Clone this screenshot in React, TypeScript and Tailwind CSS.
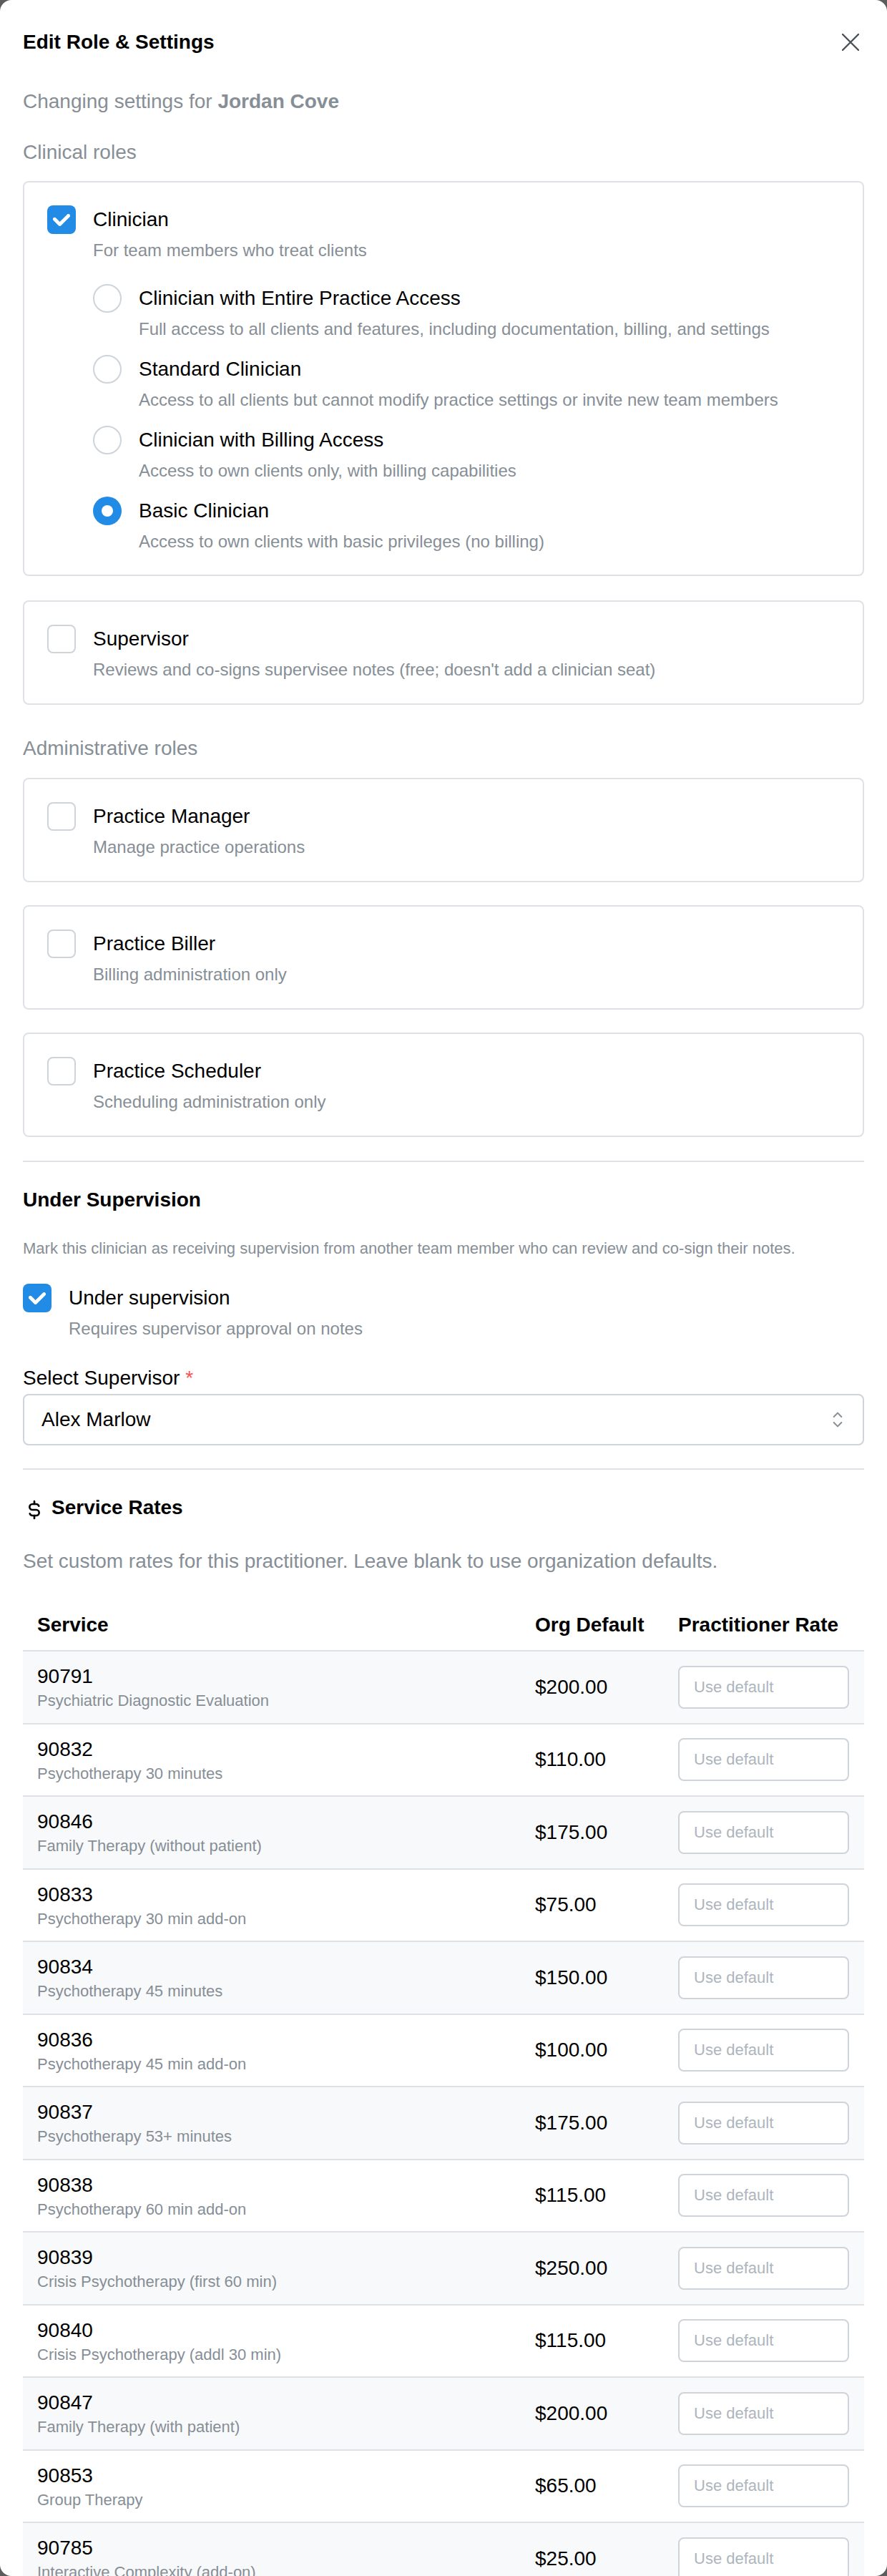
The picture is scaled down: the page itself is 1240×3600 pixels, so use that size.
const clinicianLevels = [
  {
    label: "Clinician with Entire Practice Access",
    description: "Full access to all clients and features, including documentation, billing, and settings",
  },
  {
    label: "Standard Clinician",
    description: "Access to all clients but cannot modify practice settings or invite new team members",
  },
  { label: "Clinician with Billing Access", description: "Access to own clients only, with billing capabilities" },
  { label: "Basic Clinician", description: "Access to own clients with basic privileges (no billing)", selected: true },
];

const adminRoles = [
  { label: "Practice Manager", description: "Manage practice operations" },
  { label: "Practice Biller", description: "Billing administration only" },
  { label: "Practice Scheduler", description: "Scheduling administration only" },
];

const services = [
  { code: "90791", name: "Psychiatric Diagnostic Evaluation", rate: "$200.00" },
  { code: "90832", name: "Psychotherapy 30 minutes", rate: "$110.00" },
  { code: "90846", name: "Family Therapy (without patient)", rate: "$175.00" },
  { code: "90833", name: "Psychotherapy 30 min add-on", rate: "$75.00" },
  { code: "90834", name: "Psychotherapy 45 minutes", rate: "$150.00" },
  { code: "90836", name: "Psychotherapy 45 min add-on", rate: "$100.00" },
  { code: "90837", name: "Psychotherapy 53+ minutes", rate: "$175.00" },
  { code: "90838", name: "Psychotherapy 60 min add-on", rate: "$115.00" },
  { code: "90839", name: "Crisis Psychotherapy (first 60 min)", rate: "$250.00" },
  { code: "90840", name: "Crisis Psychotherapy (addl 30 min)", rate: "$115.00" },
  { code: "90847", name: "Family Therapy (with patient)", rate: "$200.00" },
  { code: "90853", name: "Group Therapy", rate: "$65.00" },
  { code: "90785", name: "Interactive Complexity (add-on)", rate: "$25.00" },
];

function CheckBox({ checked }: { checked?: boolean }) {
  if (!checked) {
    return <div className="w-10 h-10 shrink-0 rounded-lg border-2 border-[#ced4da] bg-white" />;
  }
  return (
    <div className="w-10 h-10 shrink-0 rounded-lg bg-[#228be6] flex items-center justify-center">
      <svg viewBox="0 0 10 7" className="w-6 h-[17px]" fill="#fff">
        <path d="M4 4.586L1.707 2.293A1 1 0 1 0 .293 3.707l3 3a.997.997 0 0 0 1.414 0l5-5A1 1 0 1 0 8.293.293L4 4.586z" />
      </svg>
    </div>
  );
}

function RadioDot({ selected }: { selected?: boolean }) {
  if (!selected) {
    return <div className="w-10 h-10 shrink-0 rounded-full border-2 border-[#ced4da] bg-white" />;
  }
  return (
    <div className="w-10 h-10 shrink-0 rounded-full bg-[#228be6] flex items-center justify-center">
      <div className="w-4 h-4 rounded-full bg-white" />
    </div>
  );
}

function LabelBlock({ label, description }: { label: string; description: string }) {
  return (
    <div>
      <div className="text-[28px] leading-[40px]">{label}</div>
      <div className="mt-2 text-[24px] leading-[30px] text-[#868e96]">{description}</div>
    </div>
  );
}

function RoleCard({ label, description }: { label: string; description: string }) {
  return (
    <div className="rounded-lg border-2 border-[#dee2e6] p-8 flex gap-6">
      <CheckBox />
      <LabelBlock label={label} description={description} />
    </div>
  );
}

export default function App() {
  return (
    <div className="h-[3600px] bg-[#5c5c5c] overflow-hidden font-['Liberation_Sans',sans-serif] text-black">
      <div className="h-full bg-white rounded-2xl overflow-hidden px-8">
        {/* Header */}
        <div className="flex items-center justify-between h-[118px] pr-[7px]">
          <h2 className="text-[28px] leading-[36px] font-bold">Edit Role &amp; Settings</h2>
          <svg viewBox="0 0 24 24" className="w-6 h-6" stroke="#495057" strokeWidth="2.4" strokeLinecap="round">
            <path d="M1 1L23 23M23 1L1 23" />
          </svg>
        </div>

        <p className="mt-[2px] text-[28px] leading-[44px] text-[#868e96]">
          Changing settings for <span className="font-bold">Jordan Cove</span>
        </p>

        <p className="mt-[27px] text-[28px] leading-[44px] text-[#868e96]">Clinical roles</p>

        {/* Clinician */}
        <div className="mt-[18px] rounded-lg border-2 border-[#dee2e6] px-8 pt-8 pb-[31px]">
          <div className="flex gap-6">
            <CheckBox checked />
            <LabelBlock label="Clinician" description="For team members who treat clients" />
          </div>
          <div className="mt-8 ml-16 flex flex-col gap-[21px]">
            {clinicianLevels.map((level) => (
              <div key={level.label} className="flex gap-6">
                <RadioDot selected={level.selected} />
                <LabelBlock label={level.label} description={level.description} />
              </div>
            ))}
          </div>
        </div>

        <div className="mt-[34px]">
          <RoleCard
            label="Supervisor"
            description="Reviews and co-signs supervisee notes (free; doesn't add a clinician seat)"
          />
        </div>

        <p className="mt-[39px] text-[28px] leading-[44px] text-[#868e96]">Administrative roles</p>

        <div className="mt-[19px] flex flex-col gap-8">
          {adminRoles.map((role) => (
            <RoleCard key={role.label} label={role.label} description={role.description} />
          ))}
        </div>

        <div className="mt-[33px] border-t-2 border-[#dee2e6]" />

        {/* Under supervision */}
        <h3 className="mt-[31px] text-[28px] leading-[44px] font-bold">Under Supervision</h3>
        <p className="mt-[29px] text-[22px] leading-[34px] text-[#868e96]">
          Mark this clinician as receiving supervision from another team member who can review and co-sign their notes.
        </p>
        <div className="mt-8 flex gap-6">
          <CheckBox checked />
          <LabelBlock label="Under supervision" description="Requires supervisor approval on notes" />
        </div>

        <label className="block mt-8 text-[28px] leading-[44px]">
          Select Supervisor <span className="text-[#fa5252]">*</span>
        </label>
        <div className="h-[72px] rounded-lg border-2 border-[#ced4da] flex items-center justify-between pl-6 pr-[19px]">
          <span className="text-[28px]">Alex Marlow</span>
          <svg
            viewBox="0 0 24 24"
            className="w-8 h-8"
            fill="none"
            stroke="#868e96"
            strokeWidth="1.5"
            strokeLinecap="round"
            strokeLinejoin="round"
          >
            <path d="M8 9l4 -4l4 4" />
            <path d="M16 15l-4 4l-4 -4" />
          </svg>
        </div>

        <div className="mt-8 border-t-2 border-[#dee2e6]" />

        {/* Service rates */}
        <div className="mt-[31px] flex items-center gap-2 h-[44px]">
          <svg
            viewBox="0 0 24 24"
            className="w-8 h-8 mt-1.5"
            fill="none"
            stroke="#000"
            strokeWidth="2"
            strokeLinecap="round"
            strokeLinejoin="round"
          >
            <path d="M16.7 8a3 3 0 0 0 -2.7 -2h-4a3 3 0 0 0 0 6h4a3 3 0 0 1 0 6h-4a3 3 0 0 1 -2.7 -2" />
            <path d="M12 3v3m0 12v3" />
          </svg>
          <h3 className="text-[28px] font-bold">Service Rates</h3>
        </div>
        <p className="mt-[31px] text-[28px] leading-[44px] text-[#868e96]">
          Set custom rates for this practitioner. Leave blank to use organization defaults.
        </p>

        {/* Rates table */}
        <div className="mt-8">
          <div className="grid grid-cols-[696px_200px_280px] items-center h-[70px] text-[28px] font-bold">
            <div className="pl-5">Service</div>
            <div className="pl-5">Org Default</div>
            <div className="pl-5">Practitioner Rate</div>
          </div>
          {services.map((service, i) => (
            <div
              key={service.code}
              className={
                i % 2 === 0
                  ? "grid grid-cols-[696px_200px_280px] items-center h-[101.5px] border-t-2 border-[#dee2e6] bg-[#f8f9fa]"
                  : "grid grid-cols-[696px_200px_280px] items-center h-[101.5px] border-t-2 border-[#dee2e6]"
              }
            >
              <div className="pl-5 pt-1">
                <div className="text-[28px] leading-[34px]">{service.code}</div>
                <div className="text-[22px] leading-[33px] text-[#868e96]">{service.name}</div>
              </div>
              <div className="pl-5 text-[28px]">{service.rate}</div>
              <div className="pl-5">
                <input
                  placeholder="Use default"
                  className="w-[239px] h-[60px] rounded-lg border-2 border-[#ced4da] bg-white px-5 text-[22px] placeholder:text-[#adb5bd] outline-none"
                />
              </div>
            </div>
          ))}
        </div>
      </div>
    </div>
  );
}
